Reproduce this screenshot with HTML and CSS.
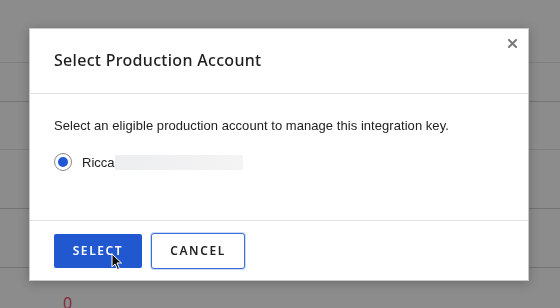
FILE: index.html
```html
<!DOCTYPE html>
<html lang="en">
<head>
    <meta charset="UTF-8">
    <meta name="viewport" content="width=device-width, initial-scale=1.0">
    <title>Select Production Account</title>
    <link rel="stylesheet" href="styles.css">
</head>
<body>
    <!-- Page behind the dialog -->
    <div class="page">
        <div class="row row-top"></div>
        <div class="row row-a"></div>
        <div class="row row-b"></div>
        <div class="row row-c"></div>
        <div class="row row-d"></div>
        <div class="row row-last"><span class="count">0</span></div>
    </div>

    <div class="overlay"></div>

    <div class="modal">
        <div class="modal-header">
            <h2>Select Production Account</h2>
            <button class="close" type="button" aria-label="Close">
                <svg width="9" height="9" viewBox="0 0 9 9">
                    <path d="M1 1 L8 8 M8 1 L1 8" stroke="#7a7a7a" stroke-width="2" stroke-linecap="square"/>
                </svg>
            </button>
        </div>

        <div class="modal-body">
            <p>Select an eligible production account to manage this integration key.</p>
            <label class="radio">
                <span class="radio-circle"><span class="radio-dot"></span></span>
                <span class="radio-label">Ricca</span>
                <span class="redacted"></span>
            </label>
        </div>

        <div class="modal-footer">
            <button class="btn btn-primary" type="button">Select</button>
            <button class="btn btn-secondary" type="button">Cancel</button>
        </div>
    </div>

    <!-- Mouse pointer -->
    <svg class="cursor" width="12" height="18" viewBox="0 0 12 18">
        <path d="M1 1 L1 14 L4 11 L6.5 16.5 L8.5 15.5 L6 10 L10.5 10 Z" fill="#111" stroke="#fff" stroke-width="1"/>
    </svg>
</body>
</html>
```

FILE: styles.css
```css
/* Global Styles */
body {
    margin: 0;
    padding: 0;
    font-family: 'Liberation Sans', Arial, sans-serif;
    background-color: #fff;
    overflow: hidden;
}

/* Page behind */
.page {
    width: 560px;
}

.row {
    box-sizing: border-box;
}

.row-top {
    height: 63px;
    border-bottom: 1px solid #e8e8e8;
}

.row-a {
    height: 39px;
    border-bottom: 1px solid #d3d3d3;
}

.row-b {
    height: 48px;
    border-bottom: 1px solid #e8e8e8;
}

.row-c {
    height: 59px;
    border-bottom: 1px solid #d3d3d3;
}

.row-d {
    height: 59px;
    border-bottom: 1px solid #d3d3d3;
}

.row-last {
    padding: 24px 0 0 63px;
}

.count {
    font-family: 'Open Sans', sans-serif;
    font-size: 16px;
    color: #f2466e;
}

.overlay {
    position: fixed;
    inset: 0;
    background-color: rgba(0, 0, 0, 0.45);
}

/* Dialog */
.modal {
    position: absolute;
    left: 29px;
    top: 28px;
    width: 500px;
    height: 253px;
    box-sizing: border-box;
    background-color: #fff;
    border: 1px solid #c8c8c8;
    box-shadow: 0 2px 10px rgba(0, 0, 0, 0.25);
    display: flex;
    flex-direction: column;
}

.modal-header {
    height: 65px;
    box-sizing: border-box;
    border-bottom: 1px solid #e3e3e3;
    padding: 0 24px 2px;
    display: flex;
    align-items: center;
    position: relative;
}

.modal-header h2 {
    margin: 0;
    font-family: 'Noto Sans', sans-serif;
    font-size: 16px;
    font-weight: 500;
    letter-spacing: 0.3px;
    color: #1f1f1f;
}

.close {
    position: absolute;
    top: 10px;
    right: 11px;
    border: none;
    background: none;
    padding: 0;
    width: 9px;
    height: 9px;
    cursor: pointer;
}

.close svg {
    display: block;
}

.modal-body {
    flex: 1;
    padding: 24px 24px 0;
    border-bottom: 1px solid #e3e3e3;
}

.modal-body p {
    margin: 0 0 20px;
    font-size: 13px;
    letter-spacing: 0.05px;
    color: #222;
}

.radio {
    display: flex;
    align-items: center;
}

.radio-circle {
    width: 16px;
    height: 16px;
    border: 1px solid #8a8a8a;
    border-radius: 50%;
    display: flex;
    align-items: center;
    justify-content: center;
    margin-right: 10px;
}

.radio-dot {
    width: 10px;
    height: 10px;
    border-radius: 50%;
    background-color: #2258d3;
}

.radio-label {
    font-size: 13px;
    color: #222;
}

.redacted {
    width: 128px;
    height: 15px;
    background: linear-gradient(90deg, #eceef0, #f1f1f2 60%, #f4f4f4);
}

.modal-footer {
    height: 59px;
    box-sizing: border-box;
    padding: 0 24px;
    display: flex;
    align-items: center;
    gap: 9px;
}

.btn {
    height: 34px;
    box-sizing: border-box;
    font-family: 'Noto Sans', sans-serif;
    font-size: 12px;
    font-weight: 600;
    letter-spacing: 1.6px;
    text-transform: uppercase;
    border-radius: 2px;
    cursor: pointer;
}

.btn-primary {
    width: 88px;
    background-color: #2158d0;
    color: #fff;
    border: none;
}

.btn-secondary {
    width: 94px;
    height: 36px;
    background-color: #fff;
    color: #222;
    border: 1px solid #3b6fd8;
    border-radius: 3px;
    box-shadow: 0 0 0 1px rgba(59, 111, 216, 0.25);
}

.cursor {
    position: absolute;
    left: 111px;
    top: 253px;
}
```
